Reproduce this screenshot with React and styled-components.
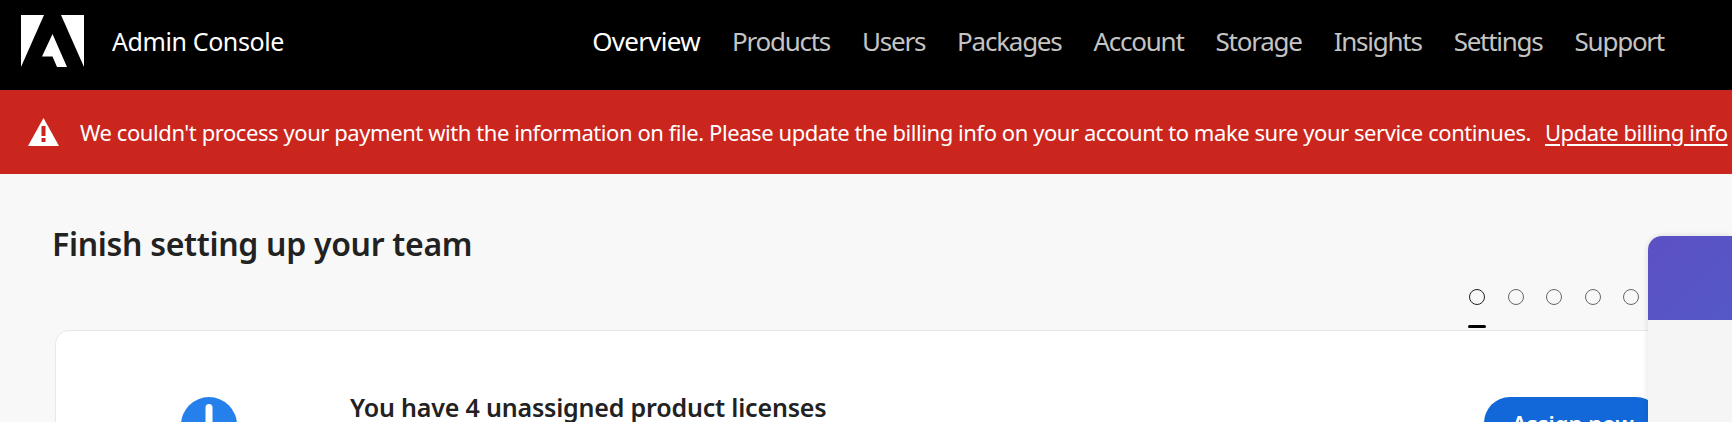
import React from "react";
import styled, { createGlobalStyle } from "styled-components";

const GlobalStyle = createGlobalStyle`
  html, body {
    margin: 0;
    padding: 0;
    height: 422px;
    overflow: hidden;
    background: #f8f8f8;
    font-family: "Noto Sans", "Open Sans", sans-serif;
  }
`;

const Page = styled.div`
  position: relative;
  width: 1732px;
  height: 422px;
  overflow: hidden;
`;

const Header = styled.header`
  display: flex;
  align-items: center;
  justify-content: space-between;
  height: 90px;
  padding: 0 68px 8px 21px;
  box-sizing: border-box;
  background: #000;
`;

const Brand = styled.div`
  display: flex;
  align-items: center;
  gap: 28px;
  color: #fff;
  font-size: 25px;
  letter-spacing: -0.4px;
`;

const Nav = styled.nav`
  display: flex;
  gap: 32px;
`;

const NavItem = styled.a`
  color: ${(p) => (p.$active ? "#fff" : "#c4c4c4")};
  font-size: 26px;
  letter-spacing: ${(p) => (p.$active ? "-0.7px" : "-1.25px")};
`;

const Banner = styled.div`
  display: flex;
  align-items: center;
  height: 84px;
  padding-left: 28px;
  box-sizing: border-box;
  background: #cb261e;
  color: #fff;
  font-size: 22px;
  letter-spacing: -0.43px;
  white-space: nowrap;
`;

const BannerText = styled.span`
  margin-left: 21px;
`;

const BannerLink = styled.a`
  margin-left: 14px;
  text-decoration: underline;
  text-underline-offset: 3px;
`;

const Main = styled.main`
  padding: 48px 0 0 52px;
`;

const Title = styled.h1`
  margin: 0;
  color: #222;
  font-size: 32px;
  line-height: 44px;
  font-weight: 600;
  letter-spacing: -0.3px;
`;

const Dots = styled.div`
  display: flex;
  gap: 22.5px;
  margin: 23px 0 0 1417px;
`;

const Dot = styled.span`
  display: flex;
  flex-direction: column;
  align-items: center;
  width: 16px;
  height: 39px;
  justify-content: space-between;

  &::before {
    content: "";
    width: 14px;
    height: 14px;
    border-radius: 50%;
    border: 1px solid ${(p) => (p.$active ? "#222" : "#666")};
  }

  &::after {
    content: "";
    flex: none;
    width: 18px;
    height: 3px;
    border-radius: 2px;
    background: ${(p) => (p.$active ? "#000" : "transparent")};
  }
`;

const Card = styled.section`
  display: flex;
  align-items: flex-start;
  width: 1700px;
  height: 200px;
  margin: 2px 0 0 3px;
  padding-top: 66px;
  box-sizing: border-box;
  background: #fff;
  border: 1px solid #e8e8e8;
  border-radius: 14px;
`;

const InfoIcon = styled.svg`
  flex: none;
  width: 56px;
  height: 56px;
  margin-left: 125px;
`;

const CardTitle = styled.h2`
  margin: -7px 0 0 113px;
  width: 1134px;
  color: #222;
  font-size: 25px;
  line-height: 34px;
  font-weight: 600;
  letter-spacing: -0.18px;
  white-space: nowrap;
`;

const AssignButton = styled.button`
  flex: none;
  height: 52px;
  padding: 0 28px;
  border: none;
  border-radius: 26px;
  background: #1268d9;
  color: #fff;
  font: 600 22px "Noto Sans", sans-serif;
`;

const SidePanel = styled.aside`
  position: absolute;
  left: 1648px;
  top: 236px;
  width: 84px;
  height: 186px;
  border-radius: 14px 0 0 0;
  background: #f5f5f5;
  box-shadow: 0 0 6px rgba(0, 0, 0, 0.12);
  overflow: hidden;

  &::before {
    content: "";
    display: block;
    height: 84px;
    background: linear-gradient(135deg, #5c50c4, #5558c8);
  }
`;

const navItems = ["Overview", "Products", "Users", "Packages", "Account", "Storage", "Insights", "Settings", "Support"];

export default function App() {
  return (
    <Page>
      <GlobalStyle />
      <Header>
        <Brand>
          <svg width="63" height="52" viewBox="0 0 63 52" fill="#fff">
            <path d="M0 0H23L0 52Z" />
            <path d="M40 0H63V52Z" />
            <path d="M31.5 19L46 52H36L31.5 41.5H21L31.5 19Z" />
          </svg>
          Admin Console
        </Brand>
        <Nav>
          {navItems.map((item, i) => (
            <NavItem key={item} $active={i === 0}>{item}</NavItem>
          ))}
        </Nav>
      </Header>
      <Banner>
        <svg width="31" height="28" viewBox="0 0 31 28">
          <path d="M15.5 0L31 28H0Z" fill="#fff" />
          <rect x="13.5" y="8" width="4" height="10" fill="#cb261e" />
          <rect x="13.5" y="20" width="4" height="4" fill="#cb261e" />
        </svg>
        <BannerText>
          We couldn't process your payment with the information on file. Please update the billing info on your account to make sure your service continues.
        </BannerText>
        <BannerLink>Update billing info</BannerLink>
      </Banner>
      <Main>
        <Title>Finish setting up your team</Title>
        <Dots>
          {[0, 1, 2, 3, 4].map((i) => (
            <Dot key={i} $active={i === 0} />
          ))}
        </Dots>
        <Card>
          <InfoIcon viewBox="0 0 56 56">
            <circle cx="28" cy="28" r="28" fill="#2680eb" />
            <rect x="24.5" y="7" width="7" height="28" rx="3.5" fill="#fff" />
            <circle cx="28" cy="44" r="4" fill="#fff" />
          </InfoIcon>
          <CardTitle>You have 4 unassigned product licenses</CardTitle>
          <AssignButton>Assign now</AssignButton>
        </Card>
      </Main>
      <SidePanel />
    </Page>
  );
}
